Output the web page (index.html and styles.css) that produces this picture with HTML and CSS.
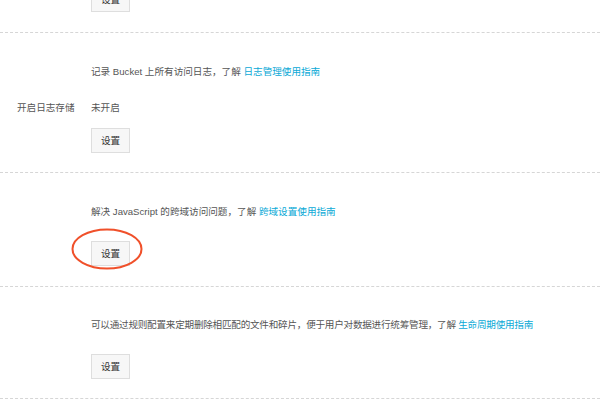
FILE: index.html
```html
<!DOCTYPE html>
<html lang="zh-CN">
<head>
<meta charset="utf-8">
<title>Bucket 设置</title>
<link rel="stylesheet" href="styles.css">
</head>
<body>
<div class="page">
  <section class="section section-top">
    <div class="row">
      <div class="label"></div>
      <div class="value"><button class="btn btn-cut">设置</button></div>
    </div>
  </section>

  <section class="section section-log">
    <div class="row desc">
      <div class="label"></div>
      <div class="value">记录 Bucket 上所有访问日志，了解 <a class="link" href="#">日志管理使用指南</a></div>
    </div>
    <div class="row status">
      <div class="label">开启日志存储</div>
      <div class="value">未开启</div>
    </div>
    <div class="row">
      <div class="label"></div>
      <div class="value"><button class="btn">设置</button></div>
    </div>
  </section>

  <section class="section section-cors">
    <div class="row desc desc-gap">
      <div class="label"></div>
      <div class="value">解决 JavaScript 的跨域访问问题，了解 <a class="link" href="#">跨域设置使用指南</a></div>
    </div>
    <div class="row">
      <div class="label"></div>
      <div class="value">
        <span class="mark-wrap">
          <button class="btn">设置</button>
          <svg class="mark" width="72" height="42" viewBox="0 0 72 42">
            <ellipse cx="36" cy="21" rx="34.5" ry="19.5" fill="none" stroke="#f0502a" stroke-width="2"/>
          </svg>
        </span>
      </div>
    </div>
  </section>

  <section class="section section-life">
    <div class="row desc desc-gap">
      <div class="label"></div>
      <div class="value tight">可以通过规则配置来定期删除相匹配的文件和碎片，便于用户对数据进行统筹管理，了解 <a class="link" href="#">生命周期使用指南</a></div>
    </div>
    <div class="row">
      <div class="label"></div>
      <div class="value"><button class="btn">设置</button></div>
    </div>
  </section>
</div>
</body>
</html>
```

FILE: styles.css
```css
html, body {
  margin: 0;
  padding: 0;
  background: #ffffff;
}

body {
  font-family: "Liberation Sans", "Noto Sans CJK SC", sans-serif;
  font-size: 9.6px;
  color: #555555;
  overflow: hidden;
}

.page {
  width: 600px;
}

.section {
  border-bottom: 1px dashed #d6d6d6;
  padding: 30px 0 19px;
}

.section-top {
  padding-top: 0;
  padding-bottom: 20px;
}

.section-cors {
  padding-bottom: 20px;
}

.section-life {
  padding-top: 29px;
}

.row {
  display: grid;
  grid-template-columns: 91px 1fr;
  line-height: 18px;
}

.label {
  padding-left: 17px;
  color: #555555;
}

.value {
  color: #555555;
}

.tight {
  letter-spacing: -0.24px;
}

.desc {
  margin-bottom: 18px;
}

.desc-gap {
  margin-bottom: 20px;
}

.status {
  margin-bottom: 11px;
}

.link {
  color: #0aa9d6;
  text-decoration: none;
}

.btn {
  display: block;
  width: 39px;
  height: 25px;
  padding: 0;
  border: 1px solid #dedede;
  background: #f7f7f7;
  color: #333333;
  font-family: "Liberation Sans", "Noto Sans CJK SC", sans-serif;
  font-size: 9.6px;
  line-height: 23px;
  text-align: center;
}

.btn-cut {
  margin-top: -13px;
}

.mark-wrap {
  position: relative;
  display: inline-block;
  vertical-align: top;
}

.mark {
  position: absolute;
  left: -20px;
  top: -13px;
  pointer-events: none;
}
```
